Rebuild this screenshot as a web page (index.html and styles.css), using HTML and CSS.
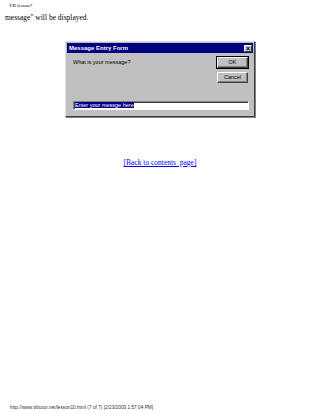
FILE: index.html
```html
<!DOCTYPE html>
<html lang="en">

<head>
    <title>VB lesson7</title>
    <meta charset="UTF-8">
    <meta name="viewport" content="width=device-width, initial-scale=1">
    <link rel="stylesheet" href="styles.css">
</head>

<body>
    <div class="page">
        <div class="top">VB lesson7</div>
        <p class="intro">message" will be displayed.</p>

        <div class="dialog">
            <div class="titlebar">
                <span>Message Entry Form</span>
                <span class="close">&#215;</span>
            </div>
            <div class="body">
                <div class="row">
                    <div class="question">What is your message?</div>
                    <div class="buttons">
                        <div class="btn btn-default">OK</div>
                        <div class="btn">Cancel</div>
                    </div>
                </div>
                <div class="input"><span class="sel">Enter your messge here</span></div>
            </div>
        </div>

        <div class="back"><a href="#">[Back to contents&nbsp; page]</a></div>

        <div class="footer">http://www.vbtutor.net/lesson10.html (7 of 7) [2/23/2003 1:57:04 PM]</div>
    </div>
</body>

</html>
```

FILE: styles.css
```css
* {
    margin: 0;
    padding: 0;
    box-sizing: border-box;
}

body {
    background: #fff;
}

.page {
    width: 320px;
    height: 414px;
    display: flex;
    flex-direction: column;
    font-family: "Liberation Serif", serif;
    color: #000;
}

.top {
    font-size: 5px;
    margin: 3px 0 0 9px;
    height: 7px;
}

.intro {
    font-size: 7.5px;
    margin: 3px 0 0 5px;
}

.dialog {
    width: 190px;
    height: 76px;
    margin: 19px 0 0 65px;
    background: #c0c0c0;
    border: 1px solid;
    border-color: #dfdfdf #404040 #404040 #dfdfdf;
    box-shadow: 1px 1px 0 #808080;
    padding: 1px;
    font-family: "Liberation Sans", sans-serif;
}

.titlebar {
    height: 10px;
    background: #000080;
    color: #fff;
    font-size: 6px;
    font-weight: bold;
    display: flex;
    align-items: center;
    justify-content: space-between;
    padding: 0 1px 0 2px;
}

.close {
    width: 8px;
    height: 7px;
    background: #c0c0c0;
    color: #000;
    font-size: 7px;
    line-height: 6px;
    text-align: center;
    border: 1px solid;
    border-color: #fff #404040 #404040 #fff;
}

.body {
    padding: 4px 5px 0 6px;
}

.row {
    display: flex;
    justify-content: space-between;
    height: 44px;
}

.question {
    font-size: 5.5px;
    padding-top: 2px;
}

.buttons {
    display: flex;
    flex-direction: column;
    gap: 4px;
}

.btn {
    width: 31px;
    height: 11px;
    font-size: 5.5px;
    text-align: center;
    line-height: 9px;
    border: 1px solid;
    border-color: #fff #404040 #404040 #fff;
    box-shadow: inset -1px -1px 0 #808080;
}

.btn-default {
    outline: 1px solid #000;
}

.input {
    height: 9px;
    width: 176px;
    background: #fff;
    border: 1px solid;
    border-color: #808080 #fff #fff #808080;
    box-shadow: inset 1px 1px 0 #404040;
    font-size: 5.5px;
    line-height: 7px;
    padding-left: 1px;
}

.sel {
    background: #000080;
    color: #fff;
}

.back {
    margin-top: 41px;
    text-align: center;
    font-size: 7.5px;
}

.back a {
    color: #0000ff;
}

.footer {
    margin: auto 0 4px 10px;
    font-family: "Liberation Sans", sans-serif;
    font-size: 4.75px;
    color: #333;
}
```
